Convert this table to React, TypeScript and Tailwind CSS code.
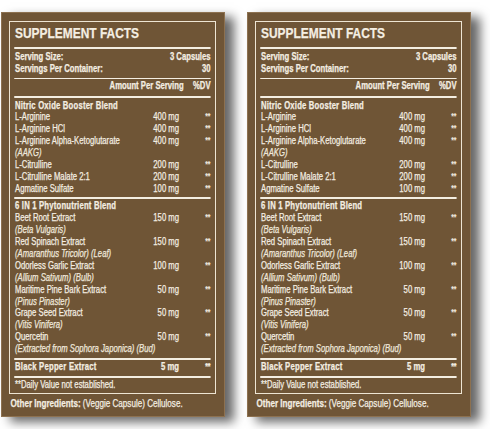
const sans = '"Liberation Sans", Arial, sans-serif';

type Row = { name: string; amount?: string; sub?: string };

const nitric: Row[] = [
	{ name: 'L-Arginine', amount: '400 mg' },
	{ name: 'L-Arginine HCl', amount: '400 mg' },
	{ name: 'L-Arginine Alpha-Ketoglutarate', amount: '400 mg', sub: '(AAKG)' },
	{ name: 'L-Citrulline', amount: '200 mg' },
	{ name: 'L-Citrulline Malate 2:1', amount: '200 mg' },
	{ name: 'Agmatine Sulfate', amount: '100 mg' },
];

const phyto: Row[] = [
	{ name: 'Beet Root Extract', amount: '150 mg', sub: '(Beta Vulgaris)' },
	{ name: 'Red Spinach Extract', amount: '150 mg', sub: '(Amaranthus Tricolor) (Leaf)' },
	{ name: 'Odorless Garlic Extract', amount: '100 mg', sub: '(Allium Sativum) (Bulb)' },
	{ name: 'Maritime Pine Bark Extract', amount: '50 mg', sub: '(Pinus Pinaster)' },
	{ name: 'Grape Seed Extract', amount: '50 mg', sub: '(Vitis Vinifera)' },
	{ name: 'Quercetin', amount: '50 mg', sub: '(Extracted from Sophora Japonica) (Bud)' },
];

function Ingredient({ row }: { row: Row }) {
	return (
		<>
			<div className="flex leading-[11.9px]">
				<span className="flex-1">{row.name}</span>
				<span className="w-[70px] text-right">{row.amount}</span>
				<span className="w-[41px] text-right text-[9px] leading-[10px]">**</span>
			</div>
			{row.sub && <div className="italic leading-[11.9px] text-[#ebe2d0]">{row.sub}</div>}
		</>
	);
}

function Panel() {
	return (
		<div
			className="flex h-[405px] w-[224px] flex-col border border-[#8d7150] bg-[#6f5536] pt-[8px] pr-[8px] pl-[7px] text-[#f4eee2] shadow-[9px_5px_10px_rgba(0,0,0,0.6)]"
			style={{ fontFamily: sans }}
		>
			{/* inner ruled frame */}
			<div className="border-[1.5px] border-[#eee5d3] pt-[2px] pb-[2px] pl-[4.5px]">
				{/* condensed type: laid out wide, squeezed horizontally */}
				<div className="flex w-[254px] origin-left scale-x-[0.77] flex-col text-[10px] [-webkit-text-stroke:0.25px_#f4eee2]">
					<h2 className="font-bold text-[15.5px] leading-[18px]">SUPPLEMENT FACTS</h2>
					<div className="mt-[4.5px] -ml-[1px] h-[2.5px] bg-[#f4eee2]" />

					<div className="mt-[1.5px] flex justify-between font-bold leading-[12.5px]">
						<span>Serving Size:</span>
						<span>3 Capsules</span>
					</div>
					<div className="flex justify-between font-bold leading-[12.5px]">
						<span>Servings Per Container:</span>
						<span>30</span>
					</div>
					<div className="mt-[2px] -ml-[1px] h-px bg-[#f4eee2]" />

					<div className="mt-[1.5px] flex justify-end font-bold leading-[12px]">
						<span>Amount Per Serving</span>
						<span className="w-[35px] text-right">%DV</span>
					</div>
					<div className="mt-[4px] -ml-[1px] h-[1.5px] bg-[#f4eee2]" />

					<div className="mt-[2px] font-bold leading-[11.9px] tracking-[0.25px]">Nitric Oxide Booster Blend</div>
					{nitric.map((r) => (
						<Ingredient key={r.name} row={r} />
					))}
					<div className="mt-[2px] -ml-[1px] h-[2px] bg-[#f4eee2]" />

					<div className="mt-[1.5px] font-bold leading-[11.9px] tracking-[0.25px]">6 IN 1 Phytonutrient Blend</div>
					{phyto.map((r) => (
						<Ingredient key={r.name} row={r} />
					))}
					<div className="mt-[2.5px] -ml-[1px] h-[2px] bg-[#f4eee2]" />

					<div className="mt-[1px] flex font-bold leading-[12px]">
						<span className="flex-1 tracking-[0.3px]">Black Pepper Extract</span>
						<span className="w-[70px] text-right">5 mg</span>
						<span className="w-[41px] text-right text-[9px] leading-[10px]">**</span>
					</div>
					<div className="mt-[3.5px] -ml-[1px] h-[2px] bg-[#f4eee2]" />

					<div className="mt-[1px] leading-[12px]">**Daily Value not established.</div>
				</div>
			</div>

			<p className="mt-[3px] w-[280px] origin-left scale-x-[0.77] pl-[2px] text-[10.5px] leading-[13px] [-webkit-text-stroke:0.25px_#f4eee2]">
				<span className="font-bold">Other Ingredients:</span> (Veggie Capsule) Cellulose.
			</p>
		</div>
	);
}

export default function App() {
	return (
		<div className="flex h-[429px] w-[490px] gap-[22px] overflow-hidden bg-white pt-[12px] pl-px">
			<Panel />
			<Panel />
		</div>
	);
}
